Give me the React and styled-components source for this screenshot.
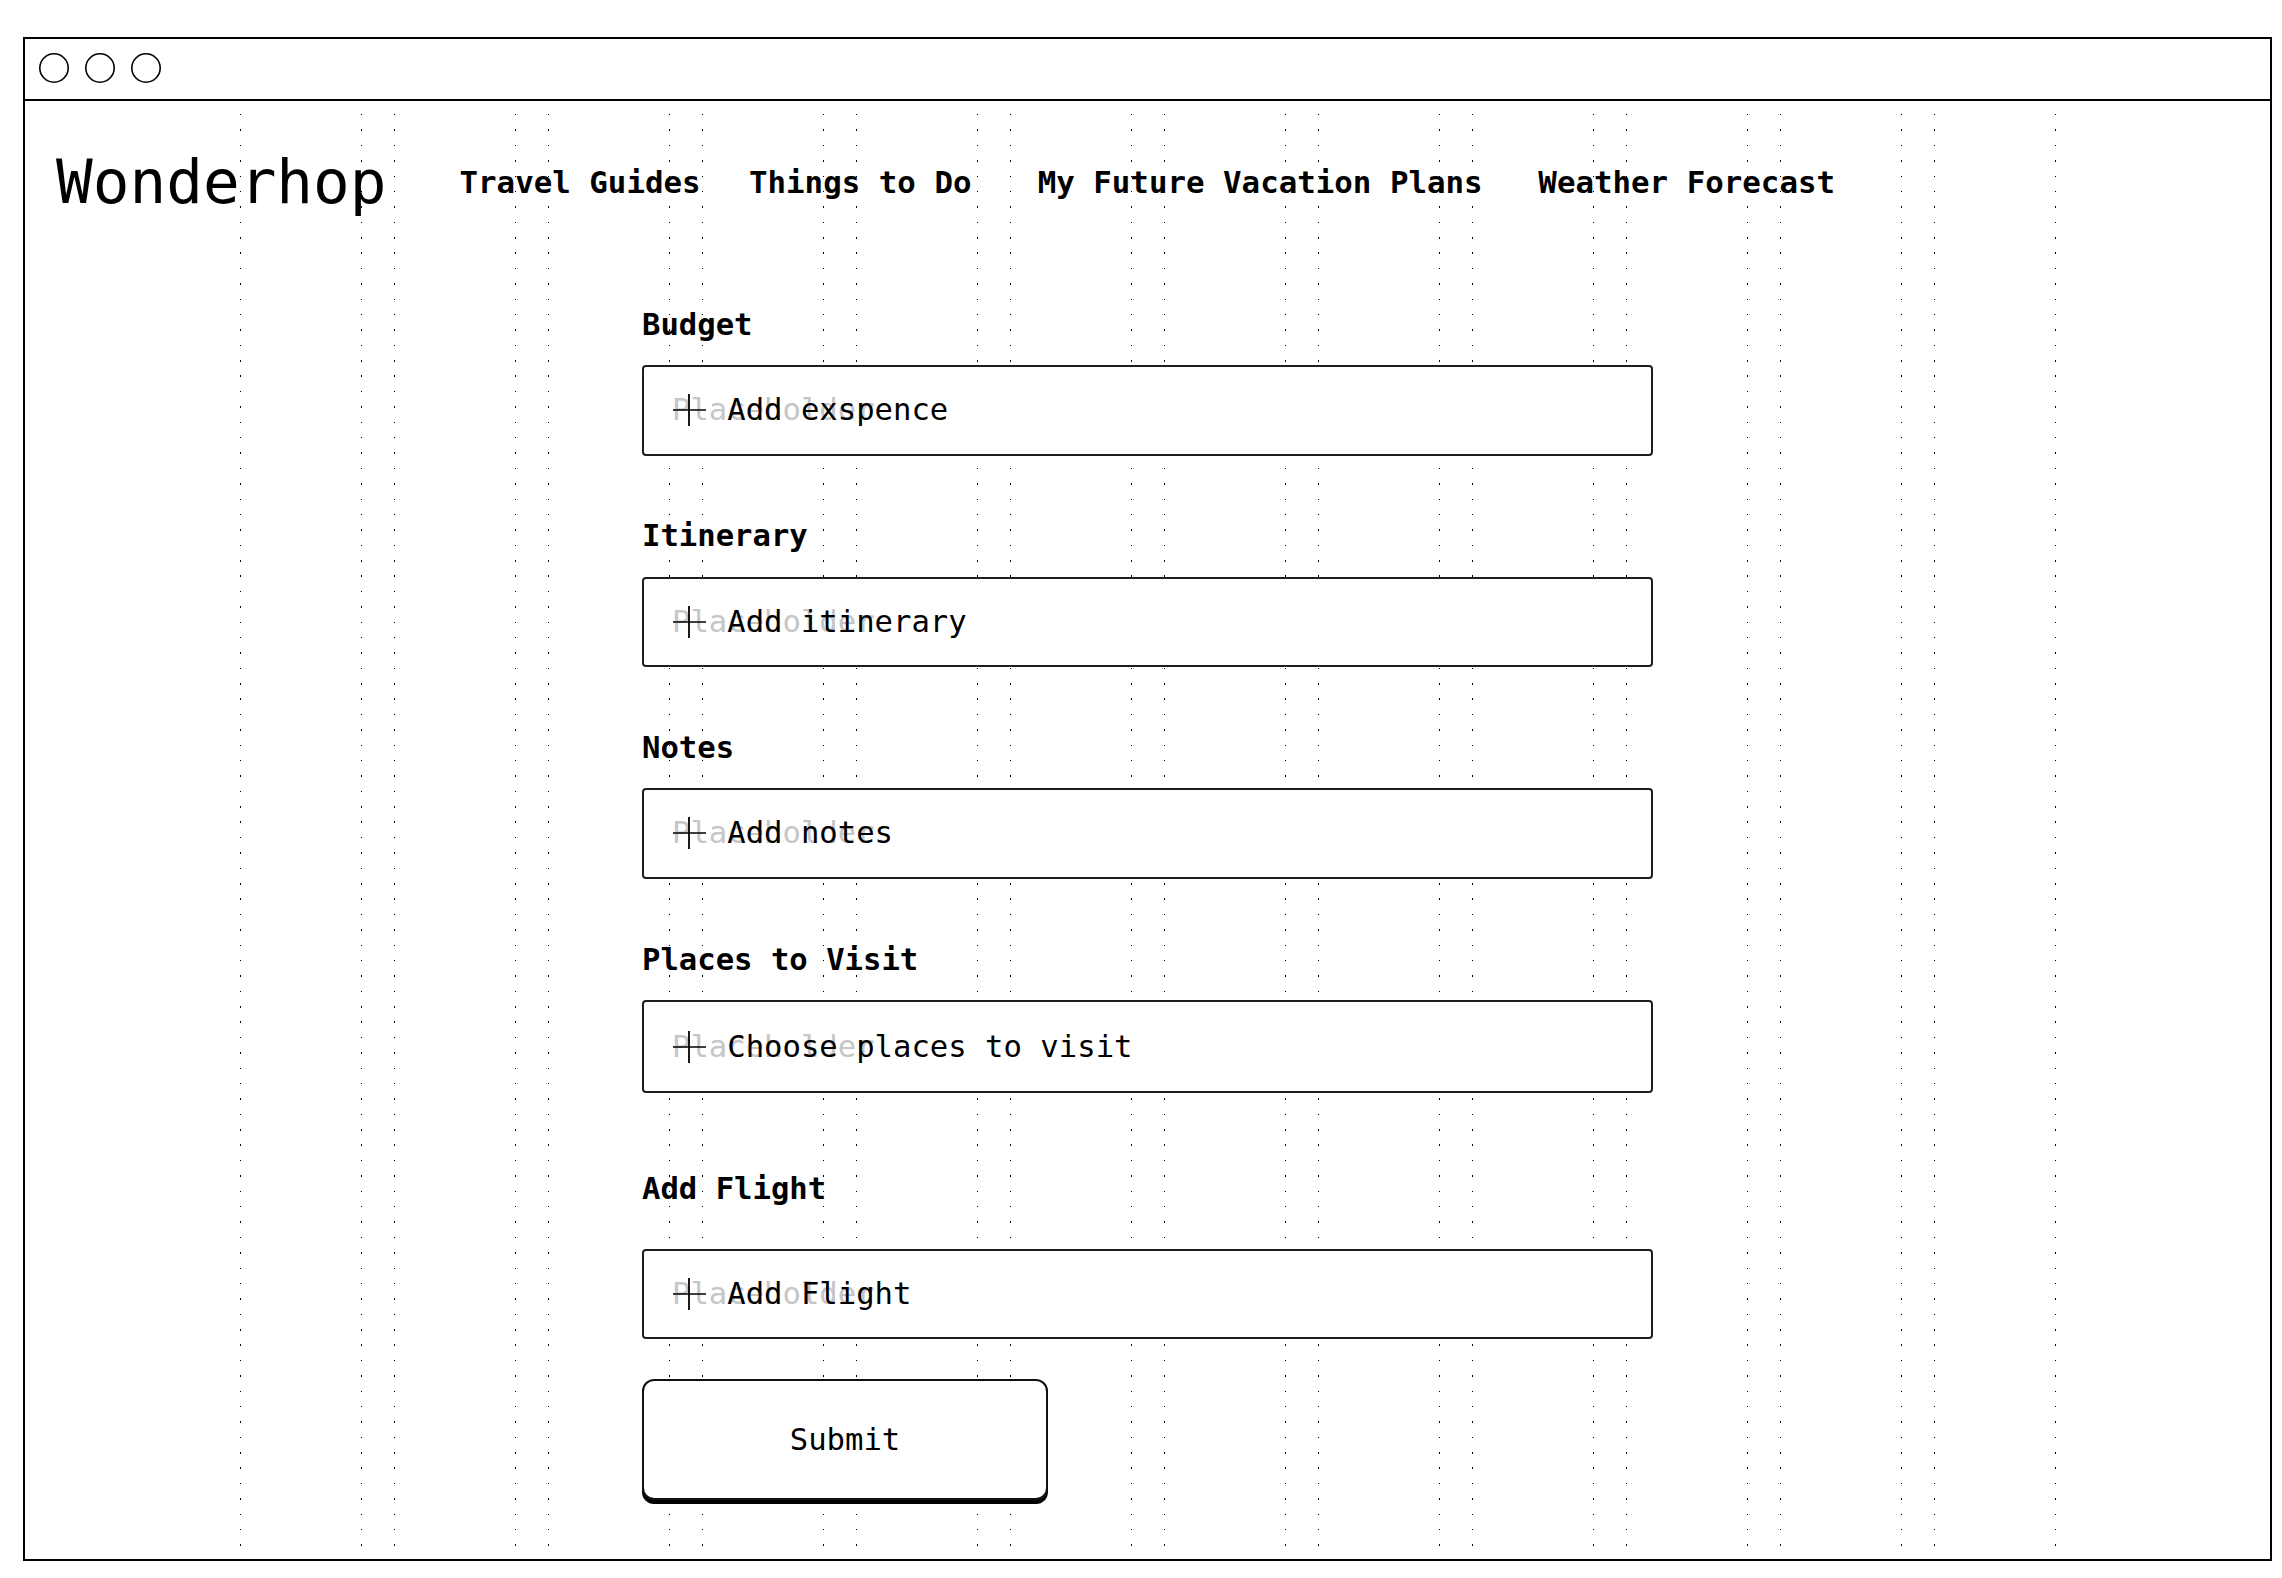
import React from "react";
import styled, { createGlobalStyle } from "styled-components";

const GlobalStyle = createGlobalStyle`
  html, body {
    margin: 0;
    padding: 0;
    background: #ffffff;
  }
  body {
    font-family: "DejaVu Sans Mono", "Liberation Mono", monospace;
    color: #000000;
  }
  *, *::before, *::after {
    box-sizing: border-box;
  }
`;

const Page = styled.div`
  padding: 37px 10px 17px 23px;
`;

const Frame = styled.div`
  width: 2249px;
  height: 1524px;
  border: 2px solid #000;
  display: flex;
  flex-direction: column;
  background: #fff;
`;

const TitleBar = styled.div`
  flex: 0 0 62px;
  border-bottom: 2px solid #000;
  display: flex;
  align-items: flex-start;
  gap: 16px;
  padding: 13.5px 0 0 14px;
`;

const WindowDot = styled.span`
  display: block;
  width: 30px;
  height: 30px;
  border-radius: 50%;
  box-shadow: inset 0 0 0 1.6px #000;
`;

const Body = styled.div`
  position: relative;
  flex: 1;
  display: flex;
  flex-direction: column;
`;

const GridOverlay = styled.div`
  position: absolute;
  top: 13px;
  bottom: 0;
  left: 215px;
  width: 1816px;
  display: grid;
  grid-template-columns: repeat(12, 122px);
  column-gap: 32px;
  pointer-events: none;
  z-index: 0;
`;

const dotLine =
  "repeating-linear-gradient(to bottom, #000 0px, #000 1.5px, transparent 1.5px, transparent 15.38px)";

const GridColumn = styled.div`
  background-image: ${dotLine}, ${dotLine};
  background-size: 1px 100%, 1px 100%;
  background-position: left top, right top;
  background-repeat: no-repeat;
`;

const Header = styled.header`
  position: relative;
  z-index: 1;
  display: flex;
  align-items: center;
  padding: 45px 0 0 31px;
`;

const Logo = styled.div`
  font-size: 61px;
  line-height: 72px;
  font-weight: 400;
  white-space: pre;
`;

const Nav = styled.nav`
  display: flex;
  align-items: center;
  margin-left: 73px;
`;

const NavLink = styled.a`
  font-size: 30.8px;
  line-height: 36px;
  font-weight: 700;
  color: #000;
  text-decoration: none;
  white-space: pre;
  margin-left: ${(p) => p.$gap || 0}px;
`;

const Form = styled.form`
  position: relative;
  z-index: 1;
  width: 1011px;
  margin: 89px auto 0;
  display: flex;
  flex-direction: column;
  align-items: flex-start;
`;

const Field = styled.div`
  align-self: stretch;
  display: flex;
  flex-direction: column;
  gap: ${(p) => p.$gap}px;
  margin-bottom: ${(p) => p.$after}px;
`;

const Label = styled.label`
  font-size: 30.6px;
  line-height: 36px;
  font-weight: 700;
  white-space: pre;
`;

const InputBox = styled.div`
  height: ${(p) => p.$height}px;
  border: 2px solid #1e1e1e;
  border-radius: 4px;
  background: #fff;
  display: flex;
  align-items: center;
  padding-left: 28px;
`;

const InputContent = styled.div`
  position: relative;
  display: flex;
  align-items: center;
  font-size: 30.6px;
  line-height: 36px;
`;

const Ghost = styled.span`
  position: absolute;
  left: 0;
  top: 0;
  color: #c6c6c6;
  white-space: pre;
  z-index: 0;
`;

const IconSlot = styled.span`
  position: relative;
  z-index: 2;
  width: 3ch;
  height: 36px;
  display: flex;
  align-items: center;
`;

const Value = styled.span`
  position: relative;
  z-index: 1;
  white-space: pre;
  color: #000;
`;

const SubmitButton = styled.button`
  width: 406px;
  height: 121px;
  border: 2px solid #111;
  border-radius: 12px;
  background: #fff;
  box-shadow: 0 4px 0 #000;
  font-family: inherit;
  font-size: 30.6px;
  font-weight: 400;
  color: #000;
  padding: 0;
  cursor: pointer;
`;

const PlusIcon = () => (
  <svg width="34" height="34" viewBox="0 0 34 34" fill="none">
    <line x1="1" y1="17" x2="34" y2="17" stroke="#000" strokeWidth="1.6" />
    <line x1="17" y1="1" x2="17" y2="33" stroke="#000" strokeWidth="1.8" />
  </svg>
);

const fields = [
  { label: "Budget", value: "Add exspence", gap: 22, height: 90.5, after: 62.5 },
  { label: "Itinerary", value: "Add itinerary", gap: 22.5, height: 90.5, after: 62.5 },
  { label: "Notes", value: "Add notes", gap: 22.5, height: 90.5, after: 63 },
  { label: "Places to Visit", value: "Choose places to visit", gap: 22.5, height: 93, after: 78 },
  { label: "Add Flight", value: "Add Flight", gap: 41.5, height: 90.5, after: 39.5 },
];

const navItems = [
  { text: "Travel Guides", gap: 0 },
  { text: "Things to Do", gap: 48.4 },
  { text: "My Future Vacation Plans", gap: 66.2 },
  { text: "Weather Forecast", gap: 55.7 },
];

export default function App() {
  return (
    <>
      <GlobalStyle />
      <Page>
        <Frame>
          <TitleBar>
            <WindowDot />
            <WindowDot />
            <WindowDot />
          </TitleBar>
          <Body>
            <GridOverlay>
              {Array.from({ length: 12 }).map((_, i) => (
                <GridColumn key={i} />
              ))}
            </GridOverlay>
            <Header>
              <Logo>Wonderhop</Logo>
              <Nav>
                {navItems.map((n) => (
                  <NavLink key={n.text} href="#" $gap={n.gap}>
                    {n.text}
                  </NavLink>
                ))}
              </Nav>
            </Header>
            <Form onSubmit={(e) => e.preventDefault()}>
              {fields.map((f) => (
                <Field key={f.label} $gap={f.gap} $after={f.after}>
                  <Label>{f.label}</Label>
                  <InputBox $height={f.height}>
                    <InputContent>
                      <Ghost>Placeholder</Ghost>
                      <IconSlot>
                        <PlusIcon />
                      </IconSlot>
                      <Value>{f.value}</Value>
                    </InputContent>
                  </InputBox>
                </Field>
              ))}
              <SubmitButton type="submit">Submit</SubmitButton>
            </Form>
          </Body>
        </Frame>
      </Page>
    </>
  );
}
